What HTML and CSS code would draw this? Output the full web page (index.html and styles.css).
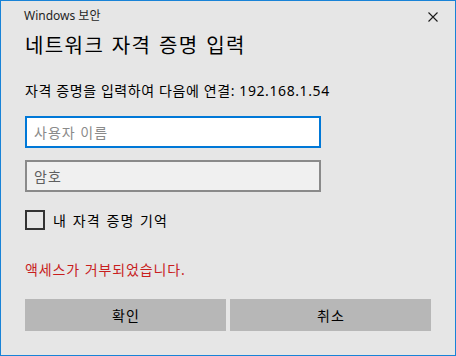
FILE: index.html
```html
<!DOCTYPE html>
<html lang="ko">
<head>
  <meta charset="UTF-8">
  <title>Windows 보안</title>
  <link rel="stylesheet" href="styles.css">
</head>
<body>
  <div class="window">
    <div class="titlebar">
      <span class="title">Windows 보안</span>
      <button class="close-btn" aria-label="닫기">
        <svg width="10" height="10" viewBox="0 0 10 10"><path d="M0.5 0.5 L9.5 9.5 M9.5 0.5 L0.5 9.5" stroke="#1a1a1a" stroke-width="1.1" fill="none"/></svg>
      </button>
    </div>
    <div class="content">
      <h1>네트워크 자격 증명 입력</h1>
      <div class="subtitle">자격 증명을 입력하여 다음에 연결: 192.168.1.54</div>
      <input class="field focused" type="text" placeholder="사용자 이름">
      <input class="field" type="password" placeholder="암호">
      <label class="remember">
        <span class="checkbox"></span>
        <span>내 자격 증명 기억</span>
      </label>
      <div class="error">액세스가 거부되었습니다.</div>
      <div class="actions">
        <button class="action-btn">확인</button>
        <button class="action-btn">취소</button>
      </div>
    </div>
  </div>
</body>
</html>
```

FILE: styles.css
```css
* {margin: 0; padding: 0; box-sizing: border-box;}
body {
  font-family: "Noto Sans", "Noto Sans CJK KR", sans-serif;
  background: #e6e6e6;
  color: #000;
}
.window {
  width: 456px;
  height: 356px;
  border: 1px solid #1883d7;
  background: #e6e6e6;
  display: flex;
  flex-direction: column;
}
.titlebar {
  display: flex;
  justify-content: space-between;
  align-items: center;
  height: 30px;
  padding-left: 23px;
}
.title {
  font-size: 12px;
  color: #1f1f1f;
  line-height: 16px;
}
.close-btn {
  width: 46px;
  height: 30px;
  border: none;
  background: transparent;
  display: flex;
  align-items: center;
  justify-content: center;
  padding-top: 2px;
  padding-left: 2px;
}
.content {
  padding: 0 24px;
  display: flex;
  flex-direction: column;
}
h1 {
  font-size: 20px;
  font-weight: 400;
  line-height: 28px;
  letter-spacing: 1.4px;
  word-spacing: 1px;
  margin-top: 1px;
}
.subtitle {
  font-size: 14px;
  line-height: 20px;
  letter-spacing: 0.6px;
  margin-top: 21px;
  margin-bottom: 15px;
}
.field {
  width: 296px;
  height: 32px;
  border: 2px solid #8a8a8a;
  background: #f0f0f0;
  padding: 0 7px;
  font-family: inherit;
  font-size: 14px;
  letter-spacing: 1px;
  outline: none;
  margin-bottom: 12px;
}
.field::placeholder {
  color: #5f5f5f;
}
.field.focused {
  border-color: #0078d7;
  background: #fff;
}
.field.focused::placeholder {
  color: #8a8a8a;
}
.remember {
  display: flex;
  align-items: center;
  gap: 8px;
  font-size: 14px;
  letter-spacing: 1.1px;
  word-spacing: 1px;
  margin-top: 6px;
  height: 20px;
}
.checkbox {
  width: 20px;
  height: 20px;
  border: 2px solid #333;
}
.error {
  color: #c81e1e;
  font-size: 14px;
  line-height: 20px;
  letter-spacing: 0.9px;
  margin-top: 30px;
}
.actions {
  display: grid;
  grid-template-columns: 201px 201px;
  gap: 4px;
  margin-top: 19px;
}
.action-btn {
  height: 32px;
  border: none;
  background: #b7b7b7;
  font-family: inherit;
  font-size: 14px;
  letter-spacing: 1px;
  text-indent: 1px;
  color: #000;
}
```
